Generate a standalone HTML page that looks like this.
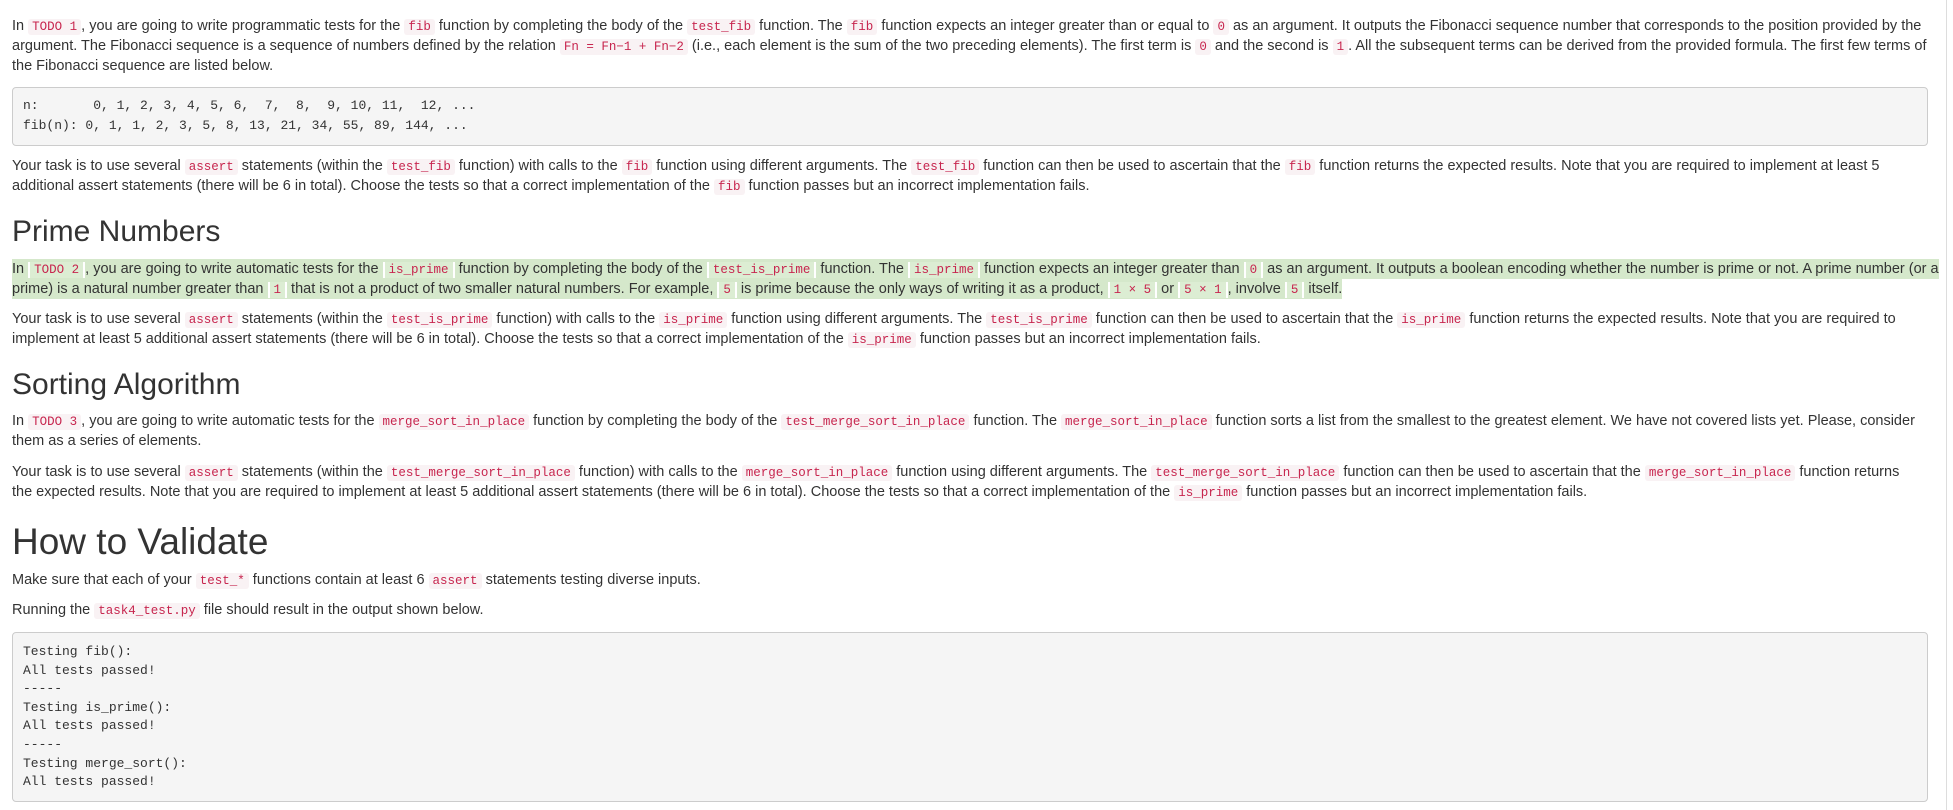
<!DOCTYPE html>
<html><head><meta charset="utf-8"><style>
html,body{margin:0;padding:0;background:#fff;}
body{width:1953px;height:810px;position:relative;overflow:hidden;font-family:"Liberation Sans",sans-serif;color:#333;font-size:14.5px;}
.l{position:absolute;left:12px;white-space:nowrap;line-height:20px;height:20px;}
code{font-family:"Liberation Mono",monospace;font-size:12.5px;color:#c7254e;background:#f9f2f4;padding:1px 4px;border-radius:3px;}
.g{background:#d5e8cb;}
.g code{background:#dcedd3;border-left:2px solid #fff;border-right:2px solid #fff;border-radius:0;}
.pre{position:absolute;left:12px;width:1916px;background:#f5f5f5;border:1px solid #ccc;border-radius:4px;font-family:"Liberation Mono",monospace;font-size:13px;color:#333;white-space:pre;box-sizing:border-box;padding:0 10px;}
h{position:absolute;left:12px;white-space:nowrap;color:#333;}
.sb{position:absolute;left:1946px;top:0;width:1px;height:810px;background:#ddd;}
</style></head><body>
<div class="l" style="top:16px">In <code>TODO 1</code>, you are going to write programmatic tests for the <code>fib</code> function by completing the body of the <code>test_fib</code> function. The <code>fib</code> function expects an integer greater than or equal to <code>0</code> as an argument. It outputs the Fibonacci sequence number that corresponds to the position provided by the</div>
<div class="l" style="top:36px">argument. The Fibonacci sequence is a sequence of numbers defined by the relation <code>Fn = Fn−1 + Fn−2</code> (i.e., each element is the sum of the two preceding elements). The first term is <code>0</code> and the second is <code>1</code>. All the subsequent terms can be derived from the provided formula. The first few terms of</div>
<div class="l" style="top:56px">the Fibonacci sequence are listed below.</div>
<div class="pre" style="top:87px;height:59px;padding-top:8px;line-height:20px;">n:       0, 1, 2, 3, 4, 5, 6,  7,  8,  9, 10, 11,  12, ...
fib(n): 0, 1, 1, 2, 3, 5, 8, 13, 21, 34, 55, 89, 144, ...</div>
<div class="l" style="top:156px">Your task is to use several <code>assert</code> statements (within the <code>test_fib</code> function) with calls to the <code>fib</code> function using different arguments. The <code>test_fib</code> function can then be used to ascertain that the <code>fib</code> function returns the expected results. Note that you are required to implement at least 5</div>
<div class="l" style="top:176px">additional assert statements (there will be 6 in total). Choose the tests so that a correct implementation of the <code>fib</code> function passes but an incorrect implementation fails.</div>
<h style="top:214px;font-size:30px;line-height:36px;">Prime Numbers</h>
<div class="l" style="top:259px"><span class="g" style="padding:2px 0">In <code>TODO 2</code>, you are going to write automatic tests for the <code>is_prime</code> function by completing the body of the <code>test_is_prime</code> function. The <code>is_prime</code> function expects an integer greater than <code>0</code> as an argument. It outputs a boolean encoding whether the number is prime or not. A prime number (or a</span></div>
<div class="l" style="top:279px"><span class="g" style="padding:2px 0">prime) is a natural number greater than <code>1</code> that is not a product of two smaller natural numbers. For example, <code>5</code> is prime because the only ways of writing it as a product, <code>1 × 5</code> or <code>5 × 1</code>, involve <code>5</code> itself.</span></div>
<div class="l" style="top:309px">Your task is to use several <code>assert</code> statements (within the <code>test_is_prime</code> function) with calls to the <code>is_prime</code> function using different arguments. The <code>test_is_prime</code> function can then be used to ascertain that the <code>is_prime</code> function returns the expected results. Note that you are required to</div>
<div class="l" style="top:329px">implement at least 5 additional assert statements (there will be 6 in total). Choose the tests so that a correct implementation of the <code>is_prime</code> function passes but an incorrect implementation fails.</div>
<h style="top:367px;font-size:30px;line-height:36px;">Sorting Algorithm</h>
<div class="l" style="top:411px">In <code>TODO 3</code>, you are going to write automatic tests for the <code>merge_sort_in_place</code> function by completing the body of the <code>test_merge_sort_in_place</code> function. The <code>merge_sort_in_place</code> function sorts a list from the smallest to the greatest element. We have not covered lists yet. Please, consider</div>
<div class="l" style="top:431px">them as a series of elements.</div>
<div class="l" style="top:462px">Your task is to use several <code>assert</code> statements (within the <code>test_merge_sort_in_place</code> function) with calls to the <code>merge_sort_in_place</code> function using different arguments. The <code>test_merge_sort_in_place</code> function can then be used to ascertain that the <code>merge_sort_in_place</code> function returns</div>
<div class="l" style="top:482px">the expected results. Note that you are required to implement at least 5 additional assert statements (there will be 6 in total). Choose the tests so that a correct implementation of the <code>is_prime</code> function passes but an incorrect implementation fails.</div>
<h style="top:520px;font-size:37px;line-height:44px;">How to Validate</h>
<div class="l" style="top:570px">Make sure that each of your <code>test_*</code> functions contain at least 6 <code>assert</code> statements testing diverse inputs.</div>
<div class="l" style="top:600px">Running the <code>task4_test.py</code> file should result in the output shown below.</div>
<div class="pre" style="top:632px;height:170px;padding-top:10px;line-height:18.6px;">Testing fib():
All tests passed!
-----
Testing is_prime():
All tests passed!
-----
Testing merge_sort():
All tests passed!</div>
<div class="sb"></div>
</body></html>
